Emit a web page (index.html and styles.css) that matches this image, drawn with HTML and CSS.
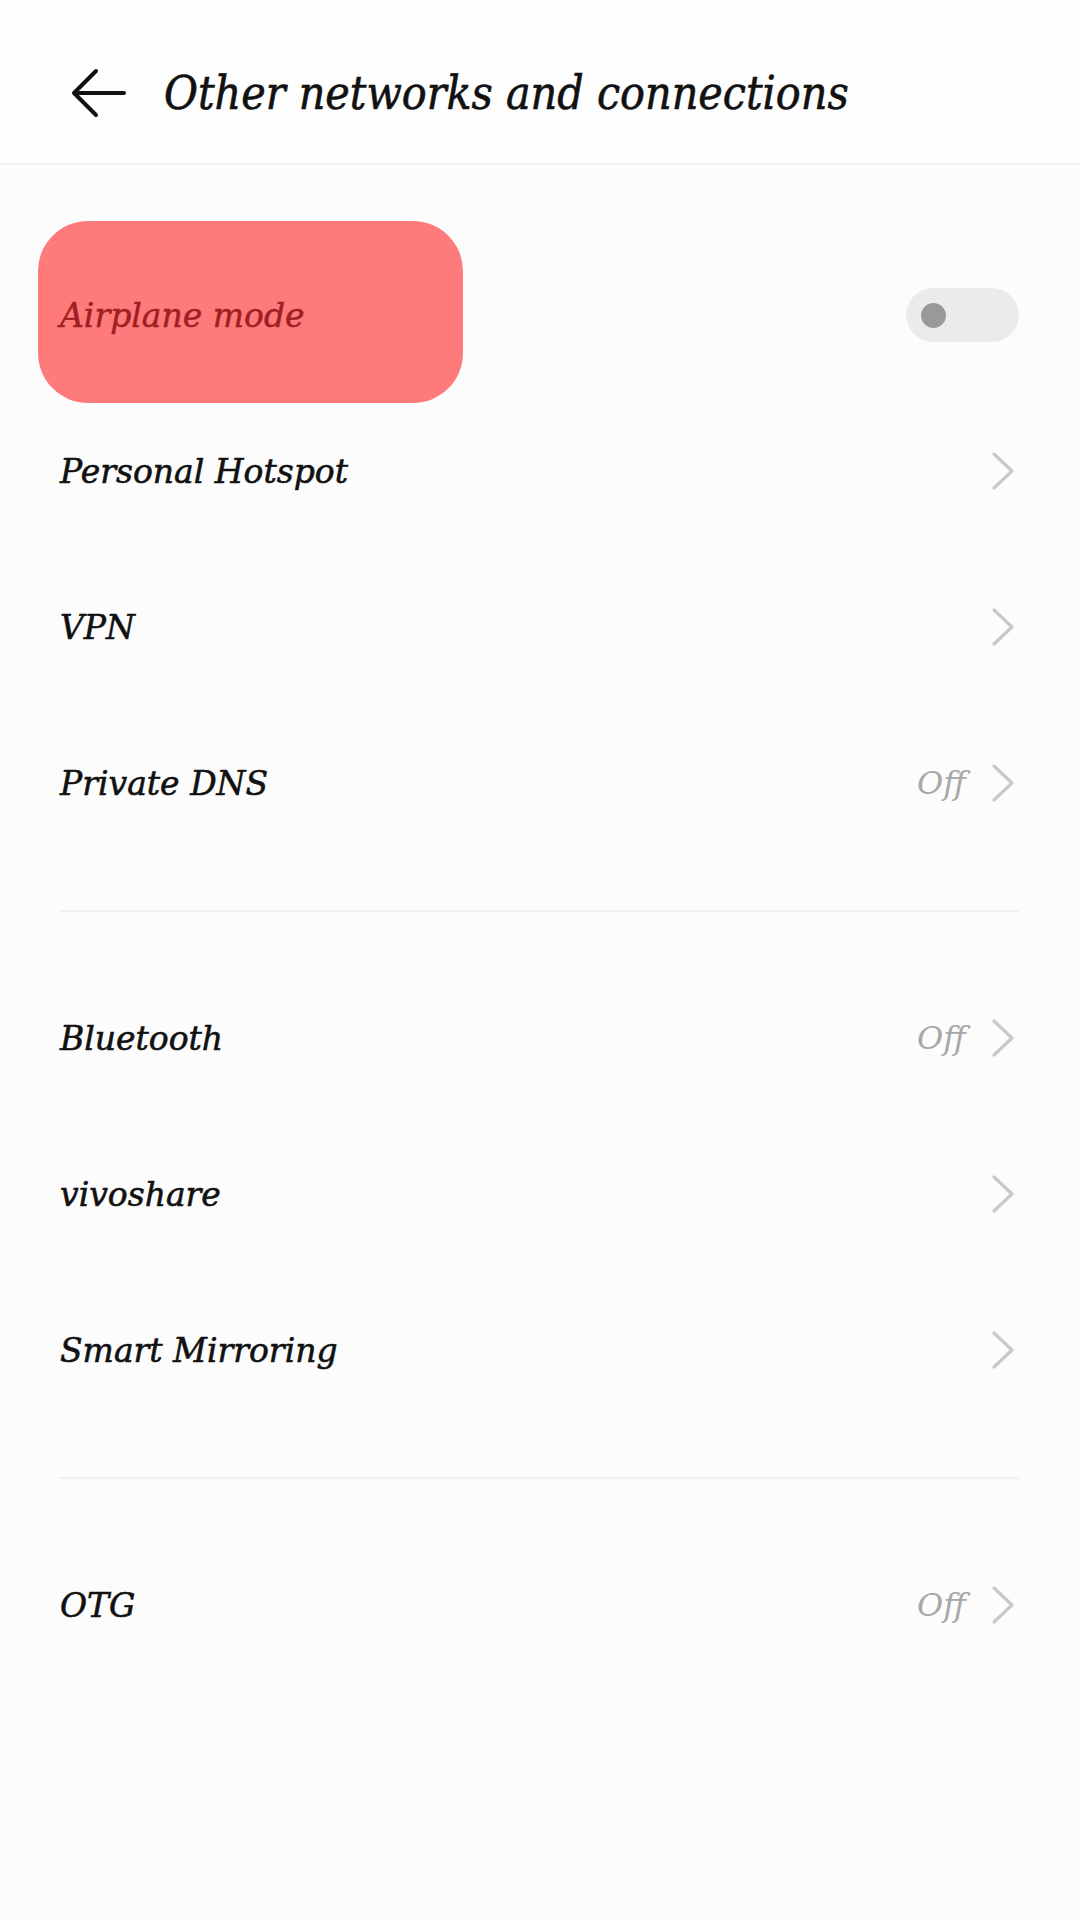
FILE: index.html
```html
<!DOCTYPE html>
<html>
<head>
<meta charset="utf-8">
<link rel="stylesheet" href="styles.css">
</head>
<body>
<div class="screen">
  <header class="topbar">
    <svg class="back" width="56" height="50" viewBox="0 0 56 50">
      <path d="M26 3 L4 25 L26 47 M4 25 H54" fill="none" stroke="#111" stroke-width="4" stroke-linecap="round" stroke-linejoin="round"/>
    </svg>
    <h1 class="title">Other networks and connections</h1>
  </header>
  <main class="list">
    <div class="row row-highlight">
      <span class="label">Airplane mode</span>
      <span class="toggle"><span class="knob"></span></span>
    </div>
    <div class="row">
      <span class="label">Personal Hotspot</span>
      <span class="right"><svg class="chev" width="26" height="40" viewBox="0 0 26 40"><path d="M4 3 L22 20 L4 37" fill="none" stroke="#c9c9c9" stroke-width="3.2" stroke-linecap="round" stroke-linejoin="round"/></svg></span>
    </div>
    <div class="row">
      <span class="label">VPN</span>
      <span class="right"><svg class="chev" width="26" height="40" viewBox="0 0 26 40"><path d="M4 3 L22 20 L4 37" fill="none" stroke="#c9c9c9" stroke-width="3.2" stroke-linecap="round" stroke-linejoin="round"/></svg></span>
    </div>
    <div class="row">
      <span class="label">Private DNS</span>
      <span class="right"><span class="value">Off</span><svg class="chev" width="26" height="40" viewBox="0 0 26 40"><path d="M4 3 L22 20 L4 37" fill="none" stroke="#c9c9c9" stroke-width="3.2" stroke-linecap="round" stroke-linejoin="round"/></svg></span>
    </div>
    <div class="divider"><hr></div>
    <div class="row">
      <span class="label">Bluetooth</span>
      <span class="right"><span class="value">Off</span><svg class="chev" width="26" height="40" viewBox="0 0 26 40"><path d="M4 3 L22 20 L4 37" fill="none" stroke="#c9c9c9" stroke-width="3.2" stroke-linecap="round" stroke-linejoin="round"/></svg></span>
    </div>
    <div class="row">
      <span class="label">vivoshare</span>
      <span class="right"><svg class="chev" width="26" height="40" viewBox="0 0 26 40"><path d="M4 3 L22 20 L4 37" fill="none" stroke="#c9c9c9" stroke-width="3.2" stroke-linecap="round" stroke-linejoin="round"/></svg></span>
    </div>
    <div class="row">
      <span class="label">Smart Mirroring</span>
      <span class="right"><svg class="chev" width="26" height="40" viewBox="0 0 26 40"><path d="M4 3 L22 20 L4 37" fill="none" stroke="#c9c9c9" stroke-width="3.2" stroke-linecap="round" stroke-linejoin="round"/></svg></span>
    </div>
    <div class="divider"><hr></div>
    <div class="row">
      <span class="label">OTG</span>
      <span class="right"><span class="value">Off</span><svg class="chev" width="26" height="40" viewBox="0 0 26 40"><path d="M4 3 L22 20 L4 37" fill="none" stroke="#c9c9c9" stroke-width="3.2" stroke-linecap="round" stroke-linejoin="round"/></svg></span>
    </div>
  </main>
</div>
</body>
</html>
```
FILE: styles.css
```css
html, body {
  margin: 0;
  padding: 0;
}
body {
  background: #fcfcfc;
  font-family: "DejaVu Serif", serif;
}
.screen {
  width: 1080px;
  height: 1920px;
  background: #fcfcfc;
  overflow: hidden;
}
.topbar {
  height: 165px;
  box-sizing: border-box;
  padding: 22px 0 0 70px;
  display: flex;
  align-items: center;
  gap: 38px;
  background: #fefefe;
  border-bottom: 2px solid #f2f2f2;
}
.back {
  display: block;
  flex: none;
}
.title {
  margin: 0;
  font-family: "DejaVu Serif", serif;
  font-stretch: condensed;
  font-style: italic;
  font-weight: normal;
  font-size: 46px;
  color: #111;
  -webkit-text-stroke: 0.6px #111;
}
.list {
  padding-top: 72px;
}
.row {
  position: relative;
  height: 156px;
  box-sizing: border-box;
  padding: 0 64px 0 60px;
  display: flex;
  align-items: center;
  justify-content: space-between;
}
.label {
  position: relative;
  z-index: 1;
  font-style: italic;
  font-size: 33px;
  color: #111;
  -webkit-text-stroke: 0.6px #111;
}
.row-highlight::before {
  content: "";
  position: absolute;
  left: 38px;
  top: -16px;
  width: 425px;
  height: 182px;
  border-radius: 50px;
  background: #ff7b7b;
}
.row-highlight .label {
  color: #a01f22;
  -webkit-text-stroke: 0.5px #a01f22;
}
.right {
  display: flex;
  align-items: center;
  gap: 24px;
}
.value {
  font-style: italic;
  font-size: 32px;
  color: #a8a8a8;
}
.chev {
  display: block;
}
.toggle {
  width: 113px;
  height: 54px;
  margin-right: -3px;
  border-radius: 27px;
  background: #ebebeb;
  display: flex;
  align-items: center;
  padding-left: 15px;
  box-sizing: border-box;
}
.knob {
  width: 25px;
  height: 25px;
  border-radius: 50%;
  background: #999;
}
.divider {
  height: 99px;
  display: flex;
  align-items: center;
  padding: 0 61px 0 60px;
}
.divider hr {
  flex: 1;
  margin: 0;
  border: 0;
  height: 2px;
  background: #f1f1f1;
}
```
